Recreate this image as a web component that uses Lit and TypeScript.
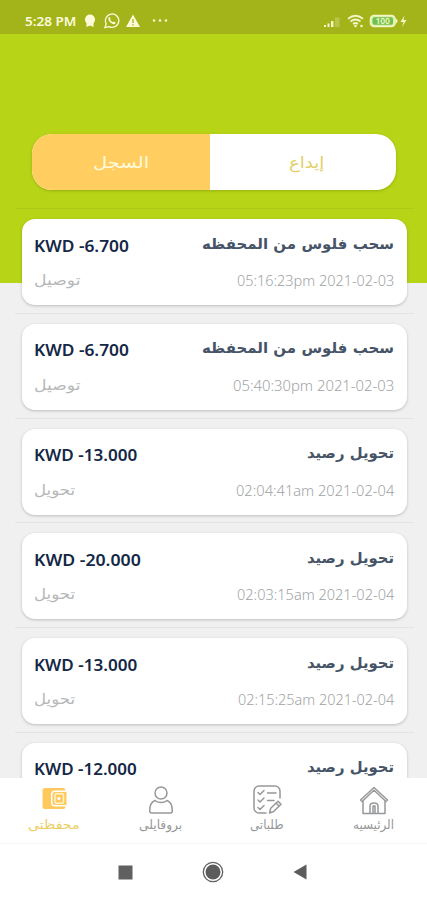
import { LitElement, html, css, svg, nothing } from "lit";
import { customElement, property, query } from "lit/decorators.js";

/** A single line of text, stretched to an exact width. */
@customElement("fit-text")
class FitText extends LitElement {
  @property({ type: Number }) width = 0;
  @query("span") line!: HTMLSpanElement;
  static styles = css`
    :host { display: block; flex: none; white-space: nowrap; direction: ltr; }
    span { display: inline-block; transform-origin: 0 50%; }
  `;
  firstUpdated() {
    const fit = () => {
      this.style.width = `${this.width}px`;
      const natural = this.line.offsetWidth;
      if (natural) this.line.style.transform = `scaleX(${this.width / natural})`;
    };
    fit();
    document.fonts.ready.then(fit);
  }
  render() { return html`<span><slot></slot></span>`; }
}

interface Entry {
  amount: string; amountW: number; title: string; titleW: number;
  kind?: string; kindW?: number; date?: string; dateW?: number;
}
const transfer = { kind: "تحويل", kindW: 41, title: "تحويل رصيد", titleW: 87 };
const withdraw = { kind: "توصيل", kindW: 47, title: "سحب فلوس من المحفظه", titleW: 192 };
const entries: Entry[] = [
  { ...withdraw, amount: "KWD -6.700", amountW: 94.5, date: "05:16:23pm 2021-02-03", dateW: 157 },
  { ...withdraw, amount: "KWD -6.700", amountW: 94.5, date: "05:40:30pm 2021-02-03", dateW: 161 },
  { ...transfer, amount: "KWD -13.000", amountW: 103.5, date: "02:04:41am 2021-02-04", dateW: 158 },
  { ...transfer, amount: "KWD -20.000", amountW: 107, date: "02:03:15am 2021-02-04", dateW: 157 },
  { ...transfer, amount: "KWD -13.000", amountW: 103.5, date: "02:15:25am 2021-02-04", dateW: 156 },
  { amount: "KWD -12.000", amountW: 103, title: "تحويل رصيد", titleW: 87 },
];

const wallet = svg`<path d="M6 3h18a2.500 2.500 0 0 1 2.500 2.500H16a4 4 0 0 0-4 4v8a4 4 0 0 0 4 4h10.500A2.500 2.500 0 0 1 24 24H6a2.500 2.500 0 0 1-2.500-2.500v-16A2.500 2.500 0 0 1 6 3z" fill="#ffc95e" stroke="none"/><path d="M16 7h11.500v13H16a2.500 2.500 0 0 1-2.500-2.500v-8A2.500 2.500 0 0 1 16 7z" fill="#ffc95e" stroke="none"/><rect x="16" y="8.800" width="8.500" height="9.400" rx="1.500" stroke="#fff3d0" stroke-width="1.400"/><circle cx="19.800" cy="13.500" r="1.600" fill="#fff" stroke="none"/>`;
const person = svg`<circle cx="15" cy="8" r="6"/><path d="M9 15.500C5 17 3.700 20.500 3.700 26q0 2 2 2h18.600q2 0 2-2C26.300 20.500 25 17 21 15.500c-3.500 2.700-8.500 2.700-12 0z"/>`;
const checklist = svg`<path d="M14 28H7a5 5 0 0 1-5-5V6a5 5 0 0 1 5-5h16a5 5 0 0 1 5 5v7"/><path d="M6 7.500l2 2 4-4M6 15l2 2 4-4M6 22.500l2 2 4-4M15.500 8H24M15.500 15.500H22"/><path d="M17.500 28l1.200-4.800 7.300-7 3 3-7.300 7.300zM24 18l3 3"/>`;
const house = svg`<path d="M1.500 15L15 2.500 28.500 15l-1.500 1.500L15 5.300 3 16.500z"/><path d="M4 16v12.500h22V16M11 28.500V21q0-3 4-3t4 3v7.500M14 28v-7h2v7"/>`;

const navItems = [
  { label: "محفظتى", w: 52, icon: wallet, cls: "active" },
  { label: "بروفايلى", w: 43, icon: person, cls: "" },
  { label: "طلباتى", w: 34, icon: checklist, cls: "" },
  { label: "الرئيسيه", w: 41, icon: house, cls: "" },
];

@customElement("app-root")
class AppRoot extends LitElement {
  static styles = css`
    * { box-sizing: border-box; }
    :host { display: flex; flex-direction: column; width: 427px; height: 900px; overflow: hidden;
      background: linear-gradient(#b8d416 0 283px, #f0f0f0 283px);
      font-family: "DejaVu Sans", sans-serif; }
    svg { display: block; flex: none; }
    .status { height: 34px; flex: none; background: #a2b41a; color: #fbfbda; display: flex;
      align-items: center; padding: 8px 18px 0 25px; font: 600 13px/16px "Noto Sans", sans-serif; }
    .status svg.left { margin-left: 8px; }
    .status svg.right { margin-left: auto; }
    .tabs { width: 364px; height: 56px; margin: 100px 0 0 32px; flex: none; display: flex; border-radius: 20px;
      overflow: hidden; background: #fff; box-shadow: 0 1px 3px #55660055; font-size: 16px; }
    .tab { flex: 1; display: flex; align-items: center; justify-content: center; color: #e3cf68; padding: 0 0 0 6px; }
    .tab.on { flex: 0 0 178px; background: #ffcd60; color: #fffbdc; padding: 0; }
    .list { flex: 1; min-height: 0; overflow: hidden; padding: 18px 13px 0 15px; }
    .entry { height: 104.8px; border-top: 1px solid #0000000c; padding: 10px 7px 0; }
    .card { height: 86px; border-radius: 13px; background: #fff; box-shadow: 0 1px 3px #00000038;
      padding: 14px 13px 0 12px; }
    .row { display: flex; justify-content: space-between; align-items: center; height: 24px; }
    .row + .row { height: 22px; margin-top: 12px; color: #b6b8b9; }
    .amount { font: 600 16.500px/24px "Noto Sans", sans-serif; color: #142746; padding-top: 1px; }
    .title { font-size: 15px; line-height: 22px; font-weight: 700; color: #465468; margin-top: -3px; }
    .kind { font-size: 15px; line-height: 22px; }
    .date { font: 300 15px/22px "Noto Sans", sans-serif; color: #a0a3a5; }
    .nav { height: 65px; flex: none; background: #fff; display: flex; justify-content: space-between;
      padding: 7px 27px 0 28px; color: #96989a; }
    .item { display: flex; flex-direction: column; align-items: center; width: 52px; font-size: 12.500px; }
    .item svg { fill: none; stroke: currentColor; stroke-width: 1.500; stroke-linejoin: round; stroke-linecap: round; }
    .item fit-text { line-height: 18px; }
    .active { color: #edce62; }
    .system { height: 57px; flex: none; background: #fff; border-top: 1px solid #f5f5f5; display: flex;
      align-items: center; padding: 0 120px 0 117.500px; justify-content: space-between; }
  `;
  render() {
    return html`
      <div class="status">
        <fit-text width="51">5:28 PM</fit-text>
        <svg class="left" width="88" height="16" viewBox="0 0 88 16" fill="#fbfbda">
          <circle cx="6" cy="6.500" r="5"/><path d="M2.500 9h7v5L6 12.500 2.500 14z"/>
          <path d="M21 14.500l1.200-3.700A6.700 6.700 0 1 1 25 13.600z" fill="none" stroke="#fbfbda" stroke-width="1.300"/>
          <path d="M24.500 4.500q1.500-1 2 1l-.5 1q1 2 3 2.800l1-.8q2 .5 1.500 1.800-1.500 1.700-4 0-4-2.800-3-5.800z"/>
          <path d="M49 1.500l7 12.500H42z"/><path d="M49 6v4M49 11v1.500" stroke="#a2b41a" stroke-width="1.300"/>
          <circle cx="70" cy="7.500" r="1.200"/><circle cx="76" cy="7.500" r="1.200"/><circle cx="82" cy="7.500" r="1.200"/>
        </svg>
        <svg class="right" width="85" height="16" viewBox="0 0 85 16" fill="#f2f5c4">
          <path d="M0 12h2v2H0zM3.500 10.500h2V14h-2zM7 8h2.500v6H7z"/><path d="M11 4.500h4.500V14H11z" opacity=".28"/>
          <g fill="none" stroke="#f2f5c4" stroke-width="1.800"><path d="M24 5.700q7.500-6 15 0M26.500 8.500q5-4 10 0M29 11q2.500-2 5 0"/></g>
          <circle cx="31.500" cy="13" r="1.300"/><circle cx="37.500" cy="13" r="1.300"/>
          <rect x="46.500" y="2.500" width="24.500" height="11" rx="3.500" fill="#d8edaa" stroke="#f2f5c4" stroke-width="1.500"/>
          <rect x="48.500" y="4.300" width="20.500" height="7.400" rx="2" fill="#6fc14c"/>
          <path d="M71.500 5l2 2v2l-2 2z"/>
          <text x="58.700" y="11" text-anchor="middle" font-family="Noto Sans" font-size="8.500" font-weight="600">100</text>
          <path d="M80.500 2.500L76.500 9h3l-1.500 5 4.500-7h-3z"/>
        </svg>
      </div>
      <div class="tabs">
        <div class="tab on"><fit-text width="56">السجل</fit-text></div>
        <div class="tab"><fit-text width="35">إيداع</fit-text></div>
      </div>
      <div class="list">
        ${entries.map((e) => html`
          <div class="entry"><div class="card">
            <div class="row">
              <fit-text class="amount" .width=${e.amountW}>${e.amount}</fit-text>
              <fit-text class="title" .width=${e.titleW}>${e.title}</fit-text>
            </div>
            ${e.kind ? html`<div class="row">
              <fit-text class="kind" .width=${e.kindW}>${e.kind}</fit-text>
              <fit-text class="date" .width=${e.dateW}>${e.date}</fit-text>
            </div>` : nothing}
          </div></div>`)}
      </div>
      <div class="nav">
        ${navItems.map((n) => html`
          <div class="item ${n.cls}">
            <svg width="30" height="31" viewBox="0 0 30 31">${n.icon}</svg>
            <fit-text .width=${n.w}>${n.label}</fit-text>
          </div>`)}
      </div>
      <div class="system">
        <svg width="15" height="15"><rect x=".5" y=".5" width="14" height="14" fill="#606060"/></svg>
        <svg width="22" height="22"><circle cx="11" cy="11" r="9.700" fill="none" stroke="#606060" stroke-width="1.300"/><circle cx="11" cy="11" r="7.500" fill="#5c5c5c"/></svg>
        <svg width="14" height="16"><path d="M13.500 .5v15L.5 8z" fill="#5c5c5c"/></svg>
      </div>`;
  }
}
